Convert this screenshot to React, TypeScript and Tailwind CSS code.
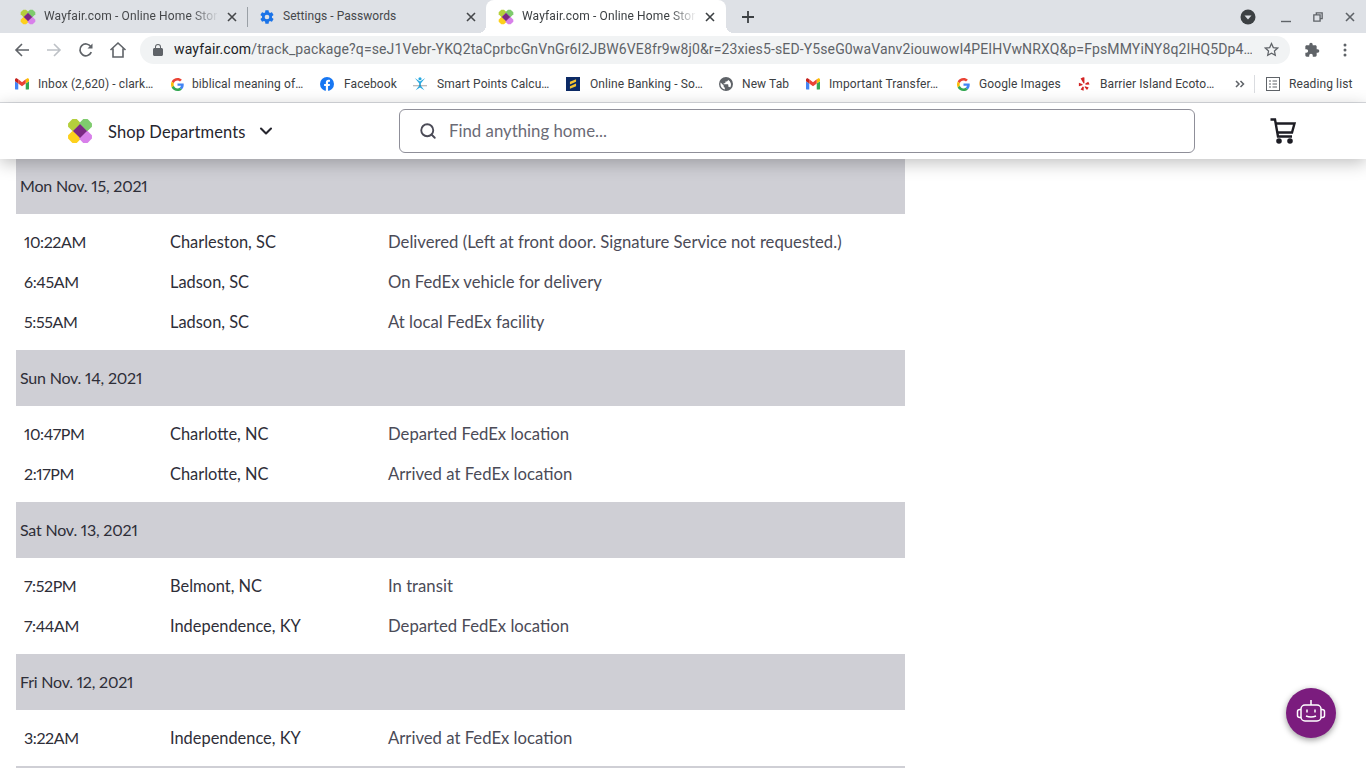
import React from "react";
import { ChevronDown, Search } from "lucide-react";

const chrome = "font-['Roboto','Liberation_Sans',sans-serif]";

const WayfairLogo = ({ size = 16 }: { size?: number }) => (
  <svg width={size} height={size} viewBox="0 0 24 24">
    <path d="M5 1h4l4 4-7 7-1 0-4-4V5z" fill="#b4cf3c" />
    <path d="M15 1h4l4 4v3l-4 4-1 0-7-7z" fill="#7fcb6e" />
    <path d="M5 12h1l7 7-4 4H5l-4-4v-3z" fill="#fdd01c" />
    <path d="M18 12h1l4 4v3l-4 4h-4l-4-4z" fill="#d880ea" />
    <path d="M12 5.5 18.5 12 12 18.5 5.500 12z" fill="#7b2784" />
  </svg>
);

const CloseIcon = ({ className = "" }: { className?: string }) => (
  <svg width="10" height="10" viewBox="0 0 10 10" className={className}>
    <path d="M1 1l8 8M9 1L1 9" stroke="currentColor" strokeWidth="1.6" />
  </svg>
);

const GearIcon = () => (
  <svg width="16" height="16" viewBox="0 0 24 24" fill="#1a73e8">
    <path d="M19.4 13c.04-.32.07-.66.07-1s-.03-.68-.07-1l2.11-1.65c.19-.15.24-.42.12-.64l-2-3.46c-.12-.22-.39-.3-.61-.22l-2.49 1c-.52-.4-1.08-.73-1.69-.98l-.38-2.65A.49.49 0 0 0 14 2h-4c-.25 0-.46.18-.49.42l-.38 2.65c-.61.25-1.17.59-1.69.98l-2.49-1c-.23-.09-.49 0-.61.22l-2 3.46c-.13.22-.07.49.12.64L4.570 11c-.04.32-.07.65-.07 1s.03.68.07 1l-2.110 1.650c-.19.15-.24.42-.12.64l2 3.460c.12.22.39.3.61.22l2.490-1c.52.4 1.080.73 1.690.98l.38 2.650c.03.24.24.42.49.42h4c.25 0 .46-.18.49-.42l.38-2.650c.61-.25 1.170-.59 1.690-.98l2.490 1c.23.09.49 0 .61-.22l2-3.460c.12-.22.07-.49-.12-.64zM12 15.500a3.500 3.500 0 1 1 0-7 3.500 3.500 0 0 1 0 7z" />
  </svg>
);

const GmailIcon = () => (
  <svg width="15" height="12" viewBox="0 0 30 24">
    <path d="M2 24h5V11L0 6v16c0 1 1 2 2 2z" fill="#4285f4" />
    <path d="M23 24h5c1 0 2-1 2-2V6l-7 5z" fill="#34a853" />
    <path d="M23 2v9l7-5V3c0-3-3-4-5-2.500z" fill="#fbbc04" />
    <path d="M7 11V2l8 6 8-6v9l-8 6z" fill="#ea4335" />
    <path d="M0 3v3l7 5V2L5 .5C3-1 0 0 0 3z" fill="#c5221f" />
  </svg>
);

const GoogleIcon = () => (
  <svg width="13" height="13" viewBox="0 0 48 48">
    <path fill="#EA4335" d="M24 9.500c3.500 0 6.700 1.200 9.200 3.600l6.900-6.900C35.900 2.400 30.500 0 24 0 14.600 0 6.500 5.400 2.600 13.200l8 6.200C12.400 13.700 17.700 9.500 24 9.500z" />
    <path fill="#4285F4" d="M47 24.500c0-1.600-.1-3.100-.4-4.500H24v9h12.900c-.6 3-2.200 5.500-4.800 7.200l7.700 6C44.300 38 47 31.800 47 24.500z" />
    <path fill="#FBBC05" d="M10.500 28.600c-.5-1.400-.8-3-.8-4.600s.3-3.200.8-4.600l-8-6.200C1 16.400 0 20.100 0 24s1 7.600 2.600 10.800z" />
    <path fill="#34A853" d="M24 48c6.500 0 11.900-2.100 15.900-5.800l-7.700-6c-2.200 1.500-5 2.300-8.200 2.300-6.300 0-11.600-4.200-13.500-9.900l-8 6.200C6.500 42.600 14.600 48 24 48z" />
  </svg>
);

const FacebookIcon = () => (
  <svg width="16" height="16" viewBox="0 0 16 16">
    <circle cx="8" cy="8" r="8" fill="#1877f2" />
    <path d="M11 10.300l.4-2.300H9.200V6.500c0-.7.300-1.200 1.200-1.200h1V3.300s-.9-.2-1.700-.2c-1.800 0-3 1.100-3 3V8h-2v2.300h2V16h2.500v-5.700z" fill="#fff" />
  </svg>
);

const SmartIcon = () => (
  <svg width="16" height="18" viewBox="0 0 16 18">
    <circle cx="8" cy="3" r="1.800" fill="#29a9e0" />
    <path d="M2 2l6 4 6-4-5 6v3l4 5-5-3-5 3 4-5V8z" fill="#29a9e0" />
    <path d="M0 11h16" stroke="#555" strokeWidth=".6" />
  </svg>
);

const BankIcon = () => (
  <svg width="16" height="16" viewBox="0 0 16 16">
    <rect width="16" height="16" fill="#0c2a66" />
    <path d="M11.500 2.500 4.500 5.500V8.500L11.500 5.500z" fill="#f4c430" />
    <path d="M11.500 7.500 4.500 10.500V13.500L11.500 10.500z" fill="#f4c430" />
  </svg>
);

const GlobeIcon = () => (
  <svg width="16" height="16" viewBox="0 0 24 24" fill="#5f6368">
    <path d="M12 0a12 12 0 1 0 0 24 12 12 0 0 0 0-24zM2.500 12c0-.9.100-1.700.300-2.500L8 14.500v1.200c0 1.300 1 2.300 2 2.300v3.400A9.500 9.500 0 0 1 2.500 12zm16.500 6.200c-.3-.9-1.100-1.700-2-1.700h-1v-3c0-.6-.5-1-1-1H8v-2h2c.6 0 1-.5 1-1v-2h2c1.300 0 2.400-1 2.400-2.300v-.6A9.500 9.500 0 0 1 19 18.200z" />
  </svg>
);

const YelpIcon = () => (
  <svg width="12" height="14" viewBox="0 0 14 16" fill="#d32323">
    <path d="M6 0 7.500.5V7L6.500 7.300 3 1.500z" />
    <path d="M1 6.500 5.500 8.200 5 9.500 1 10.500z" />
    <path d="M5.500 11 6.800 11.500 6.500 16 3 14.500z" />
    <path d="M8.200 10.500 12.500 12 10.500 15 7.700 11.500z" />
    <path d="M8.500 7.500 12 5.500 13.500 8.500 8.800 9z" />
  </svg>
);

const bookmarks = [
  { icon: <GmailIcon />, label: "Inbox (2,620) - clark…", width: "w-[155px]", gap: "gap-[9px]" },
  { icon: <GoogleIcon />, label: "biblical meaning of…", width: "w-[150px]", gap: "gap-[8px]" },
  { icon: <FacebookIcon />, label: "Facebook", width: "w-[93px]", gap: "gap-[10px]" },
  { icon: <SmartIcon />, label: "Smart Points Calcu…", width: "w-[153px]", gap: "gap-[10px]" },
  { icon: <BankIcon />, label: "Online Banking - So…", width: "w-[153px]", gap: "gap-[10px]" },
  { icon: <GlobeIcon />, label: "New Tab", width: "w-[87px]", gap: "gap-[9px]" },
  { icon: <GmailIcon />, label: "Important Transfer…", width: "w-[150px]", gap: "gap-[9px]" },
  { icon: <GoogleIcon />, label: "Google Images", width: "w-[121px]", gap: "gap-[9px]" },
  { icon: <YelpIcon />, label: "Barrier Island Ecoto…", width: "w-[158px]", gap: "gap-[9px]" },
];

const days = [
  {
    date: "Mon Nov. 15, 2021",
    height: "h-[55px] pb-[2px]",
    rows: [
      ["10:22AM", "Charleston, SC", "Delivered (Left at front door. Signature Service not requested.)"],
      ["6:45AM", "Ladson, SC", "On FedEx vehicle for delivery"],
      ["5:55AM", "Ladson, SC", "At local FedEx facility"],
    ],
  },
  {
    date: "Sun Nov. 14, 2021",
    height: "h-[56px]",
    rows: [
      ["10:47PM", "Charlotte, NC", "Departed FedEx location"],
      ["2:17PM", "Charlotte, NC", "Arrived at FedEx location"],
    ],
  },
  {
    date: "Sat Nov. 13, 2021",
    height: "h-[56px]",
    rows: [
      ["7:52PM", "Belmont, NC", "In transit"],
      ["7:44AM", "Independence, KY", "Departed FedEx location"],
    ],
  },
  {
    date: "Fri Nov. 12, 2021",
    height: "h-[56px]",
    rows: [["3:22AM", "Independence, KY", "Arrived at FedEx location"]],
  },
];

const TabStrip = () => (
  <div className="h-[33px] bg-[#dee1e6] flex items-end pl-[8px] text-[12px] tracking-[0.05px] text-[#45474a] shrink-0">
    <div className="w-[232px] h-[33px] flex items-center pl-[12px] pr-[3px]">
      <WayfairLogo />
      <span className="ml-[8px] mb-[2px] w-[175px] whitespace-nowrap tracking-[0.13px] [mask-image:linear-gradient(to_right,#000_84%,transparent_100%)]">
        Wayfair.com - Online Home Stor
      </span>
      <CloseIcon className="ml-[8px] text-[#45474a]" />
    </div>
    <div className="w-px h-[20px] bg-[#9aa0a6] mb-[6px] ml-[7px]" />
    <div className="w-[238px] h-[33px] flex items-center pl-[11px]">
      <GearIcon />
      <span className="ml-[8px] mb-[2px] w-[183px] whitespace-nowrap">Settings - Passwords</span>
      <CloseIcon className="text-[#45474a]" />
    </div>
    <div className="relative w-[240px] h-[33px] bg-white rounded-t-[8px] flex items-center pl-[12px] text-[#3c4043]">
      <div className="absolute bottom-0 -left-[8px] w-[8px] h-[8px] bg-[radial-gradient(circle_at_0_0,#dee1e6_8px,#fff_8px)]" />
      <div className="absolute bottom-0 -right-[8px] w-[8px] h-[8px] bg-[radial-gradient(circle_at_100%_0,#dee1e6_8px,#fff_8px)]" />
      <WayfairLogo />
      <span className="ml-[8px] mb-[2px] w-[175px] whitespace-nowrap tracking-[0.13px] [mask-image:linear-gradient(to_right,#000_84%,transparent_100%)]">
        Wayfair.com - Online Home Stor
      </span>
      <CloseIcon className="ml-[8px] text-[#3c4043]" />
    </div>
    <div className="h-[33px] flex items-center ml-[15px]">
      <svg width="14" height="14" viewBox="0 0 14 14">
        <path d="M7 1v12M1 7h12" stroke="#3c4043" strokeWidth="1.800" />
      </svg>
    </div>
    <div className="h-[33px] flex items-center ml-auto pr-[11px] text-[#3c4043]">
      <svg width="16" height="16" viewBox="0 0 16 16">
        <circle cx="8" cy="8" r="7.500" fill="#3c4043" />
        <path d="M4.500 6.500h7L8 10.500z" fill="#dee1e6" />
      </svg>
      <svg width="12" height="12" viewBox="0 0 12 12" className="ml-[24px]">
        <path d="M1 10.500h10" stroke="#5f6368" strokeWidth="1.400" />
      </svg>
      <svg width="10" height="10" viewBox="0 0 12 12" className="ml-[21px]">
        <path d="M4 3V1h7v7H9M1 3.500h7.500V11H1z" stroke="#5f6368" strokeWidth="1.600" fill="none" />
      </svg>
      <CloseIcon className="ml-[22px] text-[#5f6368]" />
    </div>
  </div>
);

const Toolbar = () => (
  <div className="h-[33px] bg-white flex items-center pl-[14px] shrink-0">
    <svg width="16" height="16" viewBox="0 0 16 16" fill="none" stroke="#5f6368" strokeWidth="1.600">
      <path d="M15 8H2M8 2 2 8l6 6" />
    </svg>
    <svg width="16" height="16" viewBox="0 0 16 16" fill="none" stroke="#bdc1c6" strokeWidth="1.600" className="ml-[16px]">
      <path d="M1 8h13M8 2l6 6-6 6" />
    </svg>
    <svg width="16" height="16" viewBox="0 0 16 16" fill="none" stroke="#5f6368" strokeWidth="1.700" className="ml-[16px]">
      <path d="M13.300 10.200A5.900 5.900 0 1 1 12.800 4.600" />
      <path d="M14.500 1.500v5h-5z" fill="#5f6368" stroke="none" />
    </svg>
    <svg width="18" height="18" viewBox="0 0 18 18" fill="none" stroke="#5f6368" strokeWidth="1.600" className="ml-[15px]">
      <path d="M1.500 9 9 2l7.500 7M4 7.500V16h10V7.500" />
    </svg>
    <div className="ml-[13px] w-[1150px] h-[28px] rounded-full bg-[#f1f3f4] flex items-center pl-[13px] pr-[11px] text-[14px] text-[#5f6368] tracking-[0.13px]">
      <svg width="10" height="12" viewBox="0 0 10 12" fill="#5f6368" className="shrink-0">
        <path d="M8.500 4H8V3a3 3 0 0 0-6 0v1h-.5C.7 4 0 4.700 0 5.500v5C0 11.300.7 12 1.500 12h7c.8 0 1.500-.7 1.500-1.500v-5C10 4.700 9.300 4 8.500 4zM3 3a2 2 0 0 1 4 0v1H3z" />
      </svg>
      <span className="ml-[11px] whitespace-nowrap w-[1078px] overflow-hidden">
        <span className="text-[#202124]">wayfair.com</span>
        /track_package?q=seJ1Vebr-YKQ2taCprbcGnVnGr6I2JBW6VE8fr9w8j0&r=23xies5-sED-Y5seG0waVanv2iouwowI4PEIHVwNRXQ&p=FpsMMYiNY8q2IHQ5Dp4…
      </span>
      <svg width="15" height="15" viewBox="0 0 24 24" fill="none" stroke="#5f6368" strokeWidth="2" className="ml-auto shrink-0">
        <path d="m12 2.500 2.900 6.400 6.900.8-5.100 4.700 1.400 6.900-6.100-3.500-6.100 3.500 1.400-6.900-5.100-4.700 6.900-.8z" />
      </svg>
    </div>
    <svg width="16" height="16" viewBox="0 0 24 24" fill="#5f6368" className="ml-[14px]">
      <path d="M20.500 11H19V7c0-1.100-.9-2-2-2h-4V3.500a2.500 2.500 0 0 0-5 0V5H4c-1.100 0-2 .9-2 2v3.800h1.500a2.700 2.700 0 0 1 0 5.400H2V20c0 1.100.9 2 2 2h3.800v-1.500a2.700 2.700 0 0 1 5.400 0V22H17c1.100 0 2-.9 2-2v-4h1.500a2.500 2.500 0 0 0 0-5z" />
    </svg>
    <svg width="4" height="14" viewBox="0 0 4 14" fill="#5f6368" className="ml-[23px]">
      <circle cx="2" cy="2" r="1.500" />
      <circle cx="2" cy="7" r="1.500" />
      <circle cx="2" cy="12" r="1.500" />
    </svg>
  </div>
);

const BookmarkBar = () => (
  <div className="h-[37px] bg-white border-b border-[#dadce0] flex items-center pl-[15px] text-[12px] tracking-[0.1px] text-[#3c4043] shrink-0">
    {bookmarks.map((b) => (
      <div key={b.label + b.width} className={`${b.width} ${b.gap} flex items-center whitespace-nowrap shrink-0`}>
        <span className="w-[14px] flex justify-center shrink-0">{b.icon}</span>
        <span>{b.label}</span>
      </div>
    ))}
    <svg width="10" height="8" viewBox="0 0 10 8" fill="none" stroke="#5f6368" strokeWidth="1.500">
      <path d="m1 1 3 3-3 3M5.500 1l3 3-3 3" />
    </svg>
    <div className="w-px h-[18px] bg-[#dadce0] ml-[9px]" />
    <svg width="14" height="14" viewBox="0 0 14 14" fill="none" stroke="#5f6368" className="ml-[11px]">
      <rect x=".5" y=".5" width="13" height="13" />
      <path d="M3 4h2M6.500 4H11M3 7h2M6.500 7H11M3 10h2M6.500 10H11" />
    </svg>
    <span className="ml-[9px] whitespace-nowrap">Reading list</span>
  </div>
);

const SiteHeader = () => (
  <div className="relative z-10 h-[56px] bg-white shadow-[0_4px_16px_rgba(0,0,0,0.25)] flex items-center pl-[67px] font-['Lato',sans-serif] shrink-0">
    <WayfairLogo size={26} />
    <span className="ml-[15px] mt-[2px] text-[16.5px] text-[#26262e] tracking-[0.1px] w-[138px] whitespace-nowrap">Shop Departments</span>
    <ChevronDown size={20} strokeWidth={2.500} className="ml-[10px] text-[#26262e]" />
    <div className="ml-[123px] w-[796px] h-[44px] border border-[#8f8f99] rounded-[6px] flex items-center pl-[19px]">
      <Search size={18} strokeWidth={2.500} className="text-[#4b4b57]" />
      <span className="ml-[12px] text-[16.8px] text-[#6b6b76]">Find anything home...</span>
    </div>
    <svg width="28" height="28" viewBox="0 0 28 28" fill="none" stroke="#1d1d24" strokeWidth="2.400" className="ml-[74px]">
      <path d="M1.500 2.500H6l3 17h14" />
      <path d="M7 6.500h18.500l-2.500 9H8.500" />
      <circle cx="10" cy="24" r="1.600" fill="#1d1d24" />
      <circle cx="21" cy="24" r="1.600" fill="#1d1d24" />
    </svg>
  </div>
);

const DaySection = ({ day }: { day: (typeof days)[number] }) => (
  <div>
    <div className={`${day.height} bg-[#cfcfd5] flex items-center pl-[4px] text-[16px] tracking-[-0.2px] proportional-nums text-[#2e2e38]`}>{day.date}</div>
    <div className="py-[8px]">
      {day.rows.map((row) => (
        <div key={row[0]} className="h-[40px] flex items-center pl-[8px]">
          <span className="w-[146px] text-[16px] tracking-[-0.4px] proportional-nums text-[#2e2e38]">{row[0]}</span>
          <span className="w-[218px] mt-[1px] text-[16.4px] text-[#2e2e38]">{row[1]}</span>
          <span className="mt-[1px] text-[16.7px] text-[#4b4b57]">{row[2]}</span>
        </div>
      ))}
    </div>
  </div>
);

export default function App() {
  return (
    <div className={`relative h-screen overflow-hidden bg-white flex flex-col ${chrome}`}>
      <TabStrip />
      <Toolbar />
      <BookmarkBar />
      <SiteHeader />
      <div className="w-[889px] ml-[16px] font-['Lato',sans-serif]">
        {days.map((day) => (
          <DaySection key={day.date} day={day} />
        ))}
        <div className="h-[2px] bg-[#cfcfd5]" />
      </div>
      <div className="absolute left-[1286px] top-[688px] w-[50px] h-[50px] rounded-full bg-[#7b1c7e] shadow-[0_2px_6px_rgba(0,0,0,0.4)] flex items-center justify-center">
        <svg width="30" height="30" viewBox="0 0 30 30" fill="none" stroke="#fff" strokeWidth="1.500">
          <rect x="5" y="7" width="20" height="16" rx="4" />
          <path d="M15 7V2M5 11.500H4c-1.500 0-2.500.8-2.500 2v4c0 1.200 1 2 2.500 2h1M25 11.500h1c1.500 0 2.500.8 2.500 2v4c0 1.200-1 2-2.500 2h-1M10 18c3 1.300 7 1.300 10 0M11 11.500v3M19 11.500v3" />
        </svg>
      </div>
    </div>
  );
}
